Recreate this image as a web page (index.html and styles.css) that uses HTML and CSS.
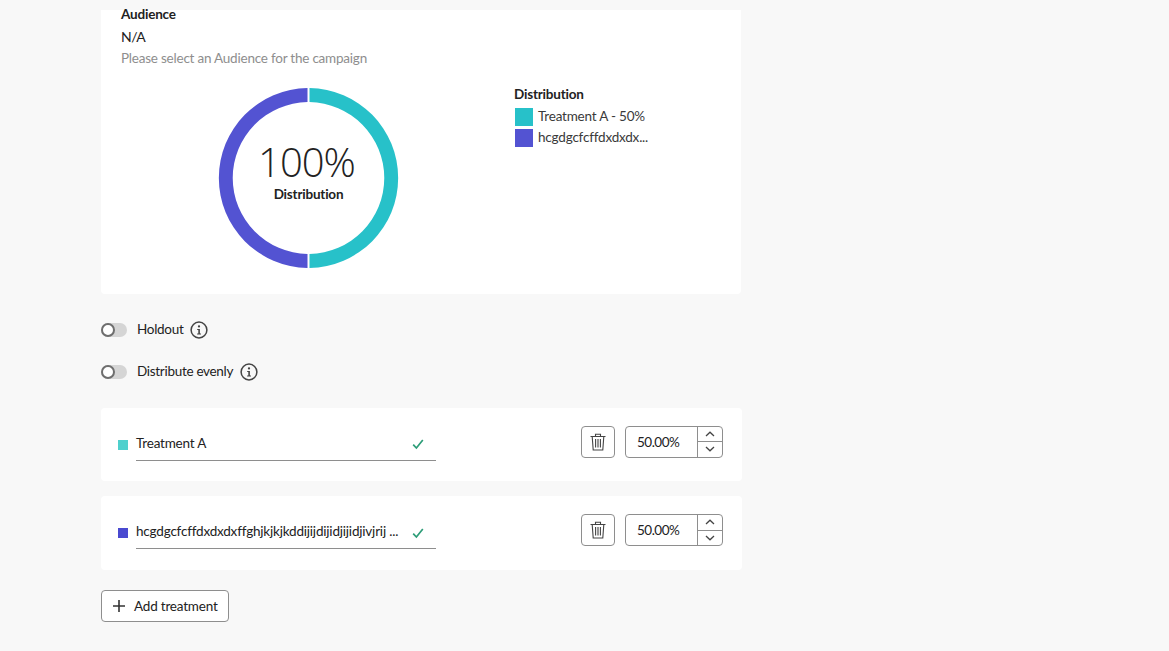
FILE: index.html
```html
<!DOCTYPE html>
<html lang="en">
<head>
<meta charset="utf-8">
<title>Treatments</title>
<link rel="stylesheet" href="styles.css">
</head>
<body>
<main class="page">
  <section class="card">
    <h2 class="label">Audience</h2>
    <p class="value">N/A</p>
    <p class="help">Please select an Audience for the campaign</p>
    <div class="chart-row">
      <div class="donut">
        <svg width="181" height="180" viewBox="0 0 181 180" aria-hidden="true">
          <path d="M91.5 0.01A90 90 0 0 1 91.5 179.99V165.99A76 76 0 0 0 91.5 14.01Z" fill="#27c1c9"/>
          <path d="M89.5 0.01A90 90 0 0 0 89.5 179.99V165.99A76 76 0 0 1 89.5 14.01Z" fill="#5353d2"/>
        </svg>
        <div class="donut-center">
          <div class="donut-num">100%</div>
          <div class="donut-label">Distribution</div>
        </div>
      </div>
      <div class="legend">
        <h3 class="legend-title">Distribution</h3>
        <div class="legend-item"><span class="swatch swatch-teal"></span><span class="legend-text">Treatment A - 50%</span></div>
        <div class="legend-item"><span class="swatch swatch-indigo"></span><span class="legend-text">hcgdgcfcffdxdxdx...</span></div>
      </div>
    </div>
  </section>

  <div class="toggle-row first">
    <span class="switch"><span class="knob"></span></span>
    <span class="toggle-text">Holdout</span>
    <svg class="info" width="18" height="18" viewBox="0 0 18 18" aria-hidden="true"><circle cx="9" cy="9" r="7.9" fill="none" stroke="#444" stroke-width="1.5"/><circle cx="9" cy="5.4" r="1.15" fill="#444"/><path d="M7.2 7.9H9.9V12.4H11V13.4H7.1V12.4H8.3V8.9H7.2Z" fill="#444"/></svg>
  </div>
  <div class="toggle-row second">
    <span class="switch"><span class="knob"></span></span>
    <span class="toggle-text">Distribute evenly</span>
    <svg class="info" width="18" height="18" viewBox="0 0 18 18" aria-hidden="true"><circle cx="9" cy="9" r="7.9" fill="none" stroke="#444" stroke-width="1.5"/><circle cx="9" cy="5.4" r="1.15" fill="#444"/><path d="M7.2 7.9H9.9V12.4H11V13.4H7.1V12.4H8.3V8.9H7.2Z" fill="#444"/></svg>
  </div>

  <section class="treatment t1">
    <span class="dot dot-teal"></span>
    <div class="name-field">
      <span class="name-text">Treatment A</span>
      <svg class="check" width="12" height="12" viewBox="0 0 12 12" aria-hidden="true"><path d="M1.2 6.6L4.4 10L10.8 2" fill="none" stroke="#2d9d78" stroke-width="1.7"/></svg>
    </div>
    <div class="controls">
      <button class="icon-btn" type="button" aria-label="Delete">
        <svg width="16" height="18" viewBox="0 0 16 18" aria-hidden="true"><path d="M0.5 3.5H15.5M5.5 3.2V1.2H10.5V3.2M2.2 3.5L3.2 17H12.8L13.8 3.5M5.6 6V14.6M8 6V14.6M10.4 6V14.6" fill="none" stroke="#444" stroke-width="1.1"/></svg>
      </button>
      <div class="stepper">
        <span class="step-value">50.00%</span>
        <span class="step-btns">
          <span class="step-btn"><svg width="10" height="6" viewBox="0 0 10 6" aria-hidden="true"><path d="M1 5L5 1.2L9 5" fill="none" stroke="#444" stroke-width="1.3"/></svg></span>
          <span class="step-btn"><svg width="10" height="6" viewBox="0 0 10 6" aria-hidden="true"><path d="M1 1L5 4.8L9 1" fill="none" stroke="#444" stroke-width="1.3"/></svg></span>
        </span>
      </div>
    </div>
  </section>

  <section class="treatment t2">
    <span class="dot dot-indigo"></span>
    <div class="name-field">
      <span class="name-text">hcgdgcfcffdxdxdxffghjkjkjkddijijdijidjijidjivjrij ...</span>
      <svg class="check" width="12" height="12" viewBox="0 0 12 12" aria-hidden="true"><path d="M1.2 6.6L4.4 10L10.8 2" fill="none" stroke="#2d9d78" stroke-width="1.7"/></svg>
    </div>
    <div class="controls">
      <button class="icon-btn" type="button" aria-label="Delete">
        <svg width="16" height="18" viewBox="0 0 16 18" aria-hidden="true"><path d="M0.5 3.5H15.5M5.5 3.2V1.2H10.5V3.2M2.2 3.5L3.2 17H12.8L13.8 3.5M5.6 6V14.6M8 6V14.6M10.4 6V14.6" fill="none" stroke="#444" stroke-width="1.1"/></svg>
      </button>
      <div class="stepper">
        <span class="step-value">50.00%</span>
        <span class="step-btns">
          <span class="step-btn"><svg width="10" height="6" viewBox="0 0 10 6" aria-hidden="true"><path d="M1 5L5 1.2L9 5" fill="none" stroke="#444" stroke-width="1.3"/></svg></span>
          <span class="step-btn"><svg width="10" height="6" viewBox="0 0 10 6" aria-hidden="true"><path d="M1 1L5 4.8L9 1" fill="none" stroke="#444" stroke-width="1.3"/></svg></span>
        </span>
      </div>
    </div>
  </section>

  <button class="add-btn" type="button">
    <svg width="14" height="14" viewBox="0 0 14 14" aria-hidden="true"><path d="M7 1V13M1 7H13" fill="none" stroke="#333" stroke-width="1.6"/></svg>
    <span>Add treatment</span>
  </button>
</main>
</body>
</html>
```
FILE: styles.css
```css
* { box-sizing: border-box; }
html, body { margin: 0; height: 100%; overflow: hidden; }
body {
  background: #f8f8f8;
  color: #222;
  font-family: Lato, "Noto Sans", sans-serif;
  font-size: 13.5px;
  letter-spacing: -0.2px;
}
.page { width: 741px; padding: 10px 0 0 101px; }
.card {
  background: #fff;
  height: 284px;
  padding: 0 20px;
  border-radius: 0 0 4px 4px;
}
.label { margin: 0; font-size: 13.5px; font-weight: 700; line-height: 8px; height: 9px; }
.value { margin: 9px 0 0; font-size: 14px; line-height: 18px; letter-spacing: -0.5px; }
.help { margin: 3px 0 0; color: #8e8e8e; font-size: 13.5px; line-height: 18px; letter-spacing: -0.22px; }
.chart-row { display: flex; margin-top: 21px; padding-left: 97px; }
.donut { position: relative; width: 181px; height: 180px; flex: none; }
.donut-center {
  position: absolute; inset: 0;
  display: flex; flex-direction: column; align-items: center;
}
.donut-num { margin: 49px 4px 0 0; font-size: 40px; font-weight: 300; line-height: 50px; font-family: "Open Sans", sans-serif; letter-spacing: -1px; }
.donut-label { font-size: 13.5px; font-weight: 700; line-height: 14px; }
.legend { margin-left: 115px; margin-top: -2px; width: 140px; }
.legend-title { margin: 0 0 4px; font-size: 13.5px; font-weight: 700; line-height: 16px; }
.legend-item { display: flex; align-items: center; gap: 5px; height: 21px; padding-left: 1px; color: #3a3a3a; }
.legend-text { margin-top: -2px; }
.swatch { width: 18px; height: 18px; flex: none; }
.swatch-teal { background: #27c1c9; }
.swatch-indigo { background: #5353d2; }
.toggle-row { display: flex; align-items: center; height: 22px; }
.toggle-row.first { margin-top: 25px; }
.toggle-row.second { margin-top: 20px; }
.switch { position: relative; width: 26px; height: 14px; border-radius: 7px; background: #d5d5d5; flex: none; }
.knob { position: absolute; left: 0; top: 0; width: 14px; height: 14px; border-radius: 50%; background: #fff; border: 2px solid #6e6e6e; }
.toggle-text { margin: -2px 0 0 10px; letter-spacing: -0.3px; }
.info { margin-left: 7px; }
.treatment { display: flex; align-items: center; width: 641px; background: #fff; border-radius: 4px; padding: 0 19px 0 17px; }
.t1 { height: 73px; margin-top: 25px; }
.t2 { height: 74px; margin-top: 15px; }
.dot { width: 10px; height: 10px; flex: none; }
.dot-teal { background: #4fd0cd; }
.dot-indigo { background: #4a4ad0; }
.name-field {
  display: flex; align-items: center; justify-content: space-between;
  width: 300px; height: 34px; margin-left: 8px; margin-top: -2px; padding: 0 12px 2px 0;
  border-bottom: 1px solid #8e8e8e;
}
.name-text { white-space: nowrap; }
.t1 .name-text { margin-top: 2px; }
.check { flex: none; margin-top: 4px; }
.controls { display: flex; align-items: center; gap: 10px; margin-left: auto; margin-top: -6px; }
.icon-btn {
  display: flex; align-items: center; justify-content: center;
  width: 34px; height: 32px; padding: 0;
  background: #fff; border: 1px solid #8e8e8e; border-radius: 4px;
}
.stepper { display: flex; width: 98px; height: 32px; border: 1px solid #8e8e8e; border-radius: 4px; }
.step-value { flex: 1; padding-left: 11px; line-height: 30px; letter-spacing: -0.5px; }
.step-btns { display: flex; flex-direction: column; width: 25px; border-left: 1px solid #8e8e8e; }
.step-btn { flex: 1; display: flex; align-items: center; justify-content: center; }
.step-btn + .step-btn { border-top: 1px solid #8e8e8e; }
.add-btn {
  display: flex; align-items: center; gap: 8px;
  width: 128px; height: 32px; margin-top: 20px; padding: 0 0 0 10px;
  background: #fff; border: 1px solid #8e8e8e; border-radius: 4px;
  font: inherit; letter-spacing: inherit; color: #222;
}
```
